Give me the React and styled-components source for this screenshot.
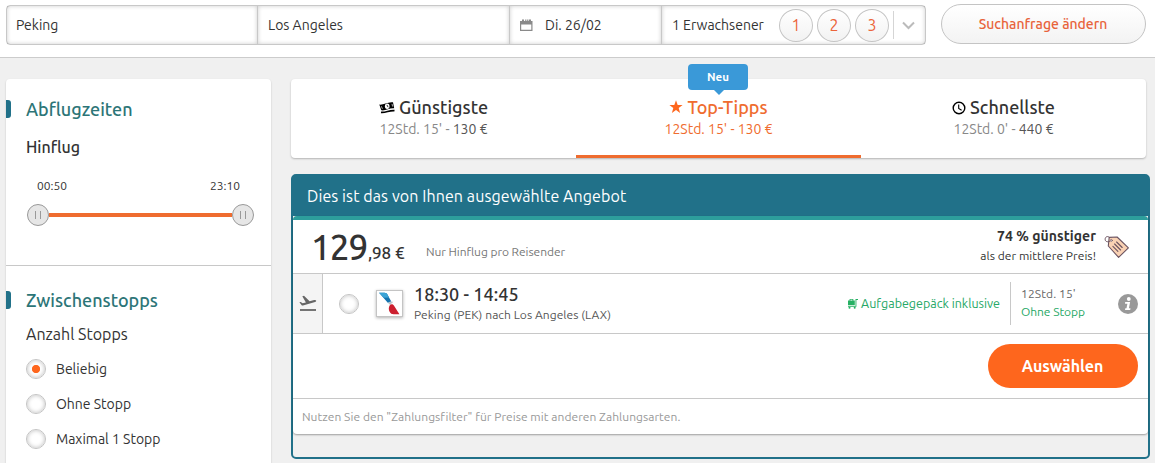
import { useState } from 'react';
import styled, { createGlobalStyle } from 'styled-components';

const airports = [
  { name: 'Peking', width: '250px' },
  { name: 'Los Angeles', width: '252px' },
];

const stops = ['Beliebig', 'Ohne Stopp', 'Maximal 1 Stopp'];

const tabs = [
  { name: 'Günstigste', time: "12Std. 15'", price: '130 €', icon: CashIcon },
  { name: 'Top-Tipps', time: "12Std. 15'", price: '130 €', icon: StarIcon, badge: 'Neu' },
  { name: 'Schnellste', time: "12Std. 0'", price: '440 €', icon: ClockIcon },
];

function CalendarIcon() {
  return (
    <svg width="13" height="13" viewBox="0 0 13 13">
      <path
        fill="#8a8a8a"
        fillRule="evenodd"
        d="M0 2h2V.5h2V2h1.2V.5h1.2V2h.8V.5h1.2V2H9V.5h2V2h1.5v10H0zM1.2 5.500v5.300h10.100V5.500z"
      />
    </svg>
  );
}

function CashIcon() {
  return (
    <svg width="16" height="14" viewBox="0 0 16 14">
      <path d="M.3 3.600C5 4 8.500.6 14 1.300l1.200 6C10.500 6.700 7 10 2.300 9.300z" fill="#000" />
      <path d="M2 11.400c5 .6 8.300-2.400 13.500-1.700" fill="none" stroke="#000" strokeWidth="1.700" />
      <ellipse cx="8.200" cy="5.300" rx="2.300" ry="2.700" fill="#fff" />
      <path d="M7.900 3.900l1.200 2.300" stroke="#000" strokeWidth=".8" fill="none" />
      <path d="M2.400 5.300l1 2.500M13 2.900l.6 2.600" stroke="#fff" fill="none" strokeWidth=".7" />
    </svg>
  );
}

function StarIcon() {
  return (
    <svg width="14" height="16" viewBox="0 0 14 16">
      <path fill="#fe661d" d="M7 .3l1.700 4.700 4.900.1-3.900 3 1.400 4.800L7 10.100l-4.100 2.800 1.400-4.800-3.900-3 4.900-.1z" />
    </svg>
  );
}

function ClockIcon() {
  return (
    <svg width="14" height="14" viewBox="0 0 14 14" fill="none" stroke="#000">
      <circle cx="7" cy="7" r="5.800" strokeWidth="1.400" />
      <path d="M6.700 3.400v4l2.900 1.800" strokeWidth="1.100" />
    </svg>
  );
}

function ChevronIcon() {
  return (
    <svg width="13" height="9" viewBox="0 0 13 9">
      <path d="M1 1.500l5.500 5.500L12 1.500" fill="none" stroke="#bbb" strokeWidth="2" />
    </svg>
  );
}

function TakeoffIcon() {
  return (
    <svg width="18" height="17" viewBox="0 0 18 17">
      <path
        fill="#666"
        d="M.4 7.300l1.300-.3 1.900 1.300 3.300-.9L3.300 1.300l1.700-.5 5.600 5.400 4.500-1.200c2.300-.5 2.900 1.400 1 2L4 10.600l-1.100-.2z"
      />
      <path d="M1 15h16" stroke="#666" strokeWidth="1.800" />
    </svg>
  );
}

function AirlineLogo() {
  return (
    <svg width="23" height="23" viewBox="0 0 22 22">
      <path d="M1 .8h5.200c1.500 0 2.400.8 3.200 2.200l3.400 6.300c-1.500 0-2.500.3-3.200 1.200z" fill="#1473ae" />
      <path d="M1 .8h5.200c1.500 0 2.400.8 3.200 2.200l1.200 2.200-5 .4z" fill="#3ba4d6" />
      <path d="M9.600 10.500c.7-1 2-1.300 5-1.100l-3 3z" fill="#b9c4cb" />
      <path d="M11.300 12.600c.9-1 2.800-1.300 3.900.3l5.300 8.400H15c-2 0-3-.8-3.900-2.400-1.100-2.200-1-4.700.2-6.300z" fill="#cc1f2f" />
    </svg>
  );
}

function CartIcon() {
  return (
    <svg width="11" height="11" viewBox="0 0 11 11" fill="#26b063">
      <path d="M1 2.500h1.600V1h3.700v1.500h1.500v4.800H1zM8.500 1H11v1H9.400v6.800H1V7.900h7.500z" />
      <path d="M3.400 1.700v.9h2v-.9z" fill="#fff" />
      <circle cx="2.500" cy="9.800" r="1" />
      <circle cx="7.700" cy="9.800" r="1" />
    </svg>
  );
}

function TagIcon() {
  return (
    <svg width="26" height="24" viewBox="0 0 26 24" strokeLinejoin="round" strokeLinecap="round">
      <path d="M5.200 2.400l7.900-.4 11.300 10.800-9.800 9.600L4.300 11z" fill="#fad2b4" stroke="#6b5360" strokeWidth="1.100" />
      <path d="M6 6.200C3.500 7.600.8 6.600 1.200 3.700 1.600 1.400 4 .8 5.400 2.400" fill="none" stroke="#6b5360" />
      <circle cx="7.300" cy="5.400" r="1" fill="#fff" stroke="#6b5360" strokeWidth=".7" />
      <path d="M12.600 7l5.600 5.500M10.600 9l6 6M8.900 11.300l5 5" stroke="#6b5360" strokeWidth="1.100" fill="none" />
    </svg>
  );
}

function InfoIcon() {
  return (
    <svg width="20" height="20" viewBox="0 0 20 20">
      <circle cx="10" cy="10" r="10" fill="#999" />
      <circle cx="10.800" cy="5" r="1.900" fill="#fff" />
      <path d="M7.200 8h4.900l-1.200 6.300h1.600l-.3 1.700H7l.3-1.700h1.200l.9-4.600H7z" fill="#fff" />
    </svg>
  );
}

const SearchHeader = () => (
  <Header>
    <SearchBar>
      {airports.map(({ name, width }) => (
        <Field key={name} $width={width}>
          {name}
        </Field>
      ))}
      <Field $width="152px">
        <CalendarIcon />
        <DateText>Di. 26/02</DateText>
      </Field>
      <Field $width="264px">
        1 Erwachsener
        <Counters>
          {[1, 2, 3].map((n) => (
            <Counter key={n} type="button">
              {n}
            </Counter>
          ))}
        </Counters>
        <MoreButton type="button">
          <ChevronIcon />
        </MoreButton>
      </Field>
    </SearchBar>
    <ChangeButton type="button">Suchanfrage ändern</ChangeButton>
  </Header>
);

const Filters = () => {
  const [selected, setSelected] = useState('Beliebig');

  return (
    <Sidebar>
      <FilterSection $height="186px">
        <FilterTitle>Abflugzeiten</FilterTitle>
        <DirectionTitle>Hinflug</DirectionTitle>
        <TimeRange>
          <span>00:50</span>
          <span>23:10</span>
        </TimeRange>
        <Slider>
          <Handle />
          <Track />
          <Handle />
        </Slider>
      </FilterSection>
      <FilterSection $height="230px" $second>
        <FilterTitle>Zwischenstopps</FilterTitle>
        <StopsTitle>Anzahl Stopps</StopsTitle>
        {stops.map((label) => (
          <Option key={label} onClick={() => setSelected(label)}>
            <Radio $checked={selected === label} />
            {label}
          </Option>
        ))}
      </FilterSection>
    </Sidebar>
  );
};

const SortTabs = () => (
  <TabBar>
    {tabs.map(({ name, time, price, icon: Icon, badge }) => (
      <Tab key={name} $active={!!badge}>
        {badge && <Badge>{badge}</Badge>}
        <TabTitle>
          <Icon />
          {name}
        </TabTitle>
        <TabInfo $active={!!badge}>
          {time} - <strong>{price}</strong>
        </TabInfo>
      </Tab>
    ))}
  </TabBar>
);

const Offer = () => (
  <OfferBox>
    <OfferHeader>Dies ist das von Ihnen ausgewählte Angebot</OfferHeader>
    <OfferCard>
      <PriceRow>
        <Amount>129</Amount>
        <Cents>,98 €</Cents>
        <PriceNote>Nur Hinflug pro Reisender</PriceNote>
        <Saving>
          <strong>74 % günstiger</strong>
          <span>als der mittlere Preis!</span>
        </Saving>
        <TagIcon />
      </PriceRow>
      <FlightRow>
        <Direction>
          <TakeoffIcon />
        </Direction>
        <Radio />
        <Airline>
          <AirlineLogo />
        </Airline>
        <Flight>
          <FlightTime>18:30 - 14:45</FlightTime>
          <Route>Peking (PEK) nach Los Angeles (LAX)</Route>
        </Flight>
        <Luggage>
          <CartIcon />
          Aufgabegepäck inklusive
        </Luggage>
        <Duration>
          <span>12Std. 15'</span>
          <Direct>Ohne Stopp</Direct>
        </Duration>
        <InfoIcon />
      </FlightRow>
      <ActionRow>
        <SelectButton type="button">Auswählen</SelectButton>
      </ActionRow>
      <PaymentNote>
        Nutzen Sie den "Zahlungsfilter" für Preise mit anderen Zahlungsarten.
      </PaymentNote>
    </OfferCard>
  </OfferBox>
);

export default function App() {
  return (
    <Page>
      <GlobalStyle />
      <SearchHeader />
      <Content>
        <Filters />
        <Results>
          <SortTabs />
          <Offer />
        </Results>
      </Content>
    </Page>
  );
}

const GlobalStyle = createGlobalStyle`
  * {
    box-sizing: border-box;
  }

  body {
    margin: 0;
    overflow: hidden;
  }

  button {
    font-family: inherit;
    padding: 0;
    cursor: pointer;
  }

  svg {
    display: block;
    flex-shrink: 0;
  }
`;

const Page = styled.div`
  height: 463px;
  overflow: hidden;
  background: #f0f0f0;
  color: #333;
  font-family: Ubuntu, 'Open Sans', 'Noto Sans', sans-serif;
  font-size: 14px;
  white-space: nowrap;
`;

const Header = styled.header`
  display: flex;
  gap: 15px;
  height: 58px;
  padding: 4px 0 0 6px;
  background: #fff;
  border-bottom: 1px solid #ccc;
`;

const SearchBar = styled.div`
  display: flex;
  width: 920px;
  height: 40px;
  margin-top: 1px;
  border: 1px solid #c8c8c8;
  border-radius: 4px;
`;

const Field = styled.div`
  display: flex;
  align-items: center;
  width: ${({ $width }) => $width};
  padding-left: 9px;
  box-shadow: inset 0 0 4px rgba(0, 0, 0, 0.2);

  & + & {
    padding-left: 10px;
    border-left: 1px solid #c8c8c8;
  }
`;

const DateText = styled.span`
  margin-left: 12px;
`;

const Counters = styled.div`
  display: flex;
  gap: 4px;
  margin-left: auto;
`;

const Counter = styled.button`
  width: 34px;
  height: 33px;
  border: 1px solid #c4c4c4;
  border-radius: 50%;
  background: linear-gradient(#fff, #f2f2f2);
  color: #ec643a;
  font-size: 16px;
`;

const MoreButton = styled.button`
  display: flex;
  align-items: center;
  justify-content: center;
  width: 32px;
  height: 28px;
  margin-left: 4px;
  padding-right: 3px;
  border: 0;
  border-left: 1px solid #d5d5d5;
  background: none;
`;

const ChangeButton = styled.button`
  width: 205px;
  height: 40px;
  padding-right: 1px;
  border: 1px solid #c4c4c4;
  border-radius: 20px;
  background: linear-gradient(#fff, #f3f3f3);
  color: #e8633b;
  font-size: 14px;
  font-weight: 500;
`;

const Content = styled.div`
  display: flex;
  align-items: flex-start;
  gap: 20px;
  padding: 21px 0 0 6px;
`;

const Sidebar = styled.aside`
  width: 265px;
  background: #fff;
  border-radius: 4px;
  box-shadow: 0 1px 2px rgba(0, 0, 0, 0.2);
`;

const FilterSection = styled.section`
  height: ${({ $height }) => $height};
  padding: ${({ $second }) => ($second ? '25px' : '21px')} 17px 0 20px;

  & + & {
    border-top: 1px solid #c8c8c8;
  }
`;

const FilterTitle = styled.h3`
  display: flex;
  align-items: center;
  height: 18px;
  margin: 0;
  color: #2c7577;
  font-size: 18px;
  font-weight: 500;
  line-height: 18px;

  &::before {
    content: '';
    width: 5px;
    height: 18px;
    margin: 0 15px 0 -20px;
    border-radius: 0 3px 3px 0;
    background: #217189;
  }
`;

const DirectionTitle = styled.h4`
  margin: 18px 0 0;
  font-size: 16px;
  font-weight: 500;
  line-height: 22px;
`;

const TimeRange = styled.div`
  display: flex;
  justify-content: space-between;
  margin-top: 20px;
  padding: 0 14px 0 11px;
  font-size: 12px;
  line-height: 16px;
`;

const Slider = styled.div`
  display: flex;
  align-items: center;
  margin: 10px 0 0 1px;
`;

const Handle = styled.div`
  display: flex;
  align-items: center;
  justify-content: center;
  width: 22px;
  height: 22px;
  border: 1px solid #999;
  border-radius: 50%;
  background: #e6e6e6;

  &::before {
    content: '';
    width: 4px;
    height: 8px;
    border: solid #999;
    border-width: 0 1px;
  }
`;

const Track = styled.div`
  flex: 1;
  height: 4px;
  background: #ef6c2f;
`;

const StopsTitle = styled.div`
  margin: 14px 0;
  font-size: 16px;
  line-height: 22px;
`;

const Option = styled.div`
  display: flex;
  align-items: center;
  gap: 10px;
  height: 20px;
  margin-bottom: 15px;
  cursor: pointer;
`;

const Radio = styled.span`
  width: 20px;
  height: 20px;
  flex-shrink: 0;
  border: 1px solid #c4c4c4;
  border-radius: 50%;
  background: ${({ $checked }) =>
    $checked ? 'radial-gradient(circle, #fe661d 3.7px, #fff 4.5px)' : '#fff'};
  box-shadow: inset 0 0 4px rgba(0, 0, 0, 0.25);
`;

const Results = styled.main`
  width: 859px;
`;

const TabBar = styled.nav`
  display: grid;
  grid-template-columns: repeat(3, 1fr);
  width: 855px;
  height: 79px;
  background: #fff;
  border-radius: 4px;
  box-shadow: 0 1px 2px rgba(0, 0, 0, 0.25);
`;

const Tab = styled.div`
  position: relative;
  display: flex;
  flex-direction: column;
  align-items: center;
  padding-top: 17px;
  color: ${({ $active }) => ($active ? '#ef6c2f' : '#333')};
  border-bottom: 3px solid ${({ $active }) => ($active ? '#ef6c2f' : 'transparent')};
`;

const Badge = styled.span`
  position: absolute;
  top: -15px;
  left: 112px;
  width: 60px;
  height: 26px;
  border-radius: 4px;
  background: #3a99d8;
  color: #fff;
  font-size: 11.5px;
  font-weight: 700;
  line-height: 26px;
  text-align: center;

  &::after {
    content: '';
    position: absolute;
    top: 26px;
    left: 26px;
    border: 5px solid transparent;
    border-top-color: #3a99d8;
    border-bottom: 0;
  }
`;

const TabTitle = styled.h2`
  display: flex;
  align-items: center;
  gap: 4px;
  margin: 0;
  font-size: 18px;
  font-weight: 500;
  line-height: 23px;
`;

const TabInfo = styled.div`
  color: ${({ $active }) => ($active ? 'inherit' : '#888')};
  line-height: 20px;

  strong {
    color: ${({ $active }) => ($active ? 'inherit' : '#555')};
    font-weight: 400;
  }
`;

const OfferBox = styled.section`
  height: 285px;
  margin-top: 16px;
  border: 2px solid #217189;
  border-radius: 5px;
`;

const OfferHeader = styled.div`
  height: 40px;
  padding-left: 14px;
  background: #217189;
  color: #fff;
  font-size: 16px;
  line-height: 41px;
  letter-spacing: 0.1px;
`;

const OfferCard = styled.article`
  height: 218px;
  background: #fff;
  border-top: 4px solid #2d9e9c;
  border-radius: 4px;
  box-shadow: 0 1px 2px rgba(0, 0, 0, 0.35);
`;

const PriceRow = styled.div`
  display: flex;
  height: 53px;
  padding: 0 18px;
  align-items: center;
`;

const Amount = styled.span`
  width: 56px;
  font-size: 35px;
  font-weight: 500;
  letter-spacing: -1px;
`;

const Cents = styled.span`
  width: 39px;
  margin: 11px 0 0 1px;
  font-size: 17px;
  font-weight: 500;
  letter-spacing: -0.1px;
`;

const PriceNote = styled.span`
  margin: 10px 0 0 19px;
  color: #777;
  font-size: 12px;
  letter-spacing: -0.05px;
`;

const Saving = styled.div`
  display: flex;
  flex-direction: column;
  align-items: flex-end;
  margin: -1px 8px 0 auto;
  font-size: 12px;
  line-height: 19px;
  letter-spacing: 0.06px;

  strong {
    font-size: 14px;
  }
`;

const FlightRow = styled.div`
  display: flex;
  align-items: center;
  height: 61px;
  padding-right: 10px;
  border: solid #c8c8c8;
  border-width: 1px 0;
`;

const Direction = styled.div`
  display: flex;
  align-items: center;
  justify-content: center;
  width: 30px;
  height: 100%;
  margin-right: 16px;
  background: #f4f4f4;
  border-right: 1px solid #c8c8c8;
`;

const Airline = styled.div`
  display: flex;
  align-items: center;
  justify-content: center;
  width: 27px;
  height: 27px;
  margin: 0 11px 0 17px;
  border: 1px solid #c4c4c4;
  box-shadow: 0 1px 3px rgba(0, 0, 0, 0.3);
`;

const Flight = styled.div`
  display: flex;
  flex-direction: column;
  padding-top: 2px;
`;

const FlightTime = styled.span`
  font-size: 18px;
  font-weight: 500;
  line-height: 21px;
  letter-spacing: 0.05px;
`;

const Route = styled.span`
  color: #555;
  font-size: 12px;
  line-height: 20px;
  letter-spacing: 0.05px;
`;

const Luggage = styled.div`
  display: flex;
  align-items: center;
  gap: 3px;
  margin: -1px 0 0 auto;
  color: #26a866;
  font-size: 12.5px;
`;

const Duration = styled.div`
  display: flex;
  flex-direction: column;
  justify-content: center;
  width: 108px;
  height: 43px;
  margin-left: 10px;
  padding: 0 0 1px 10px;
  border-left: 1px solid #c8c8c8;
  color: #666;
  font-size: 12px;
  line-height: 18px;
  letter-spacing: 0.12px;
`;

const Direct = styled.span`
  color: #26a866;
  letter-spacing: -0.05px;
`;

const ActionRow = styled.div`
  display: flex;
  align-items: center;
  justify-content: flex-end;
  height: 65px;
  padding-right: 10px;
  border-bottom: 1px solid #c8c8c8;
`;

const SelectButton = styled.button`
  width: 150px;
  height: 44px;
  padding-right: 1px;
  border: 0;
  border-radius: 22px;
  background: #fe661d;
  color: #fff;
  font-size: 16px;
  font-weight: 600;
  letter-spacing: -0.05px;
`;

const PaymentNote = styled.div`
  padding-left: 9px;
  color: #999;
  font-size: 12px;
  line-height: 36px;
  letter-spacing: 0.05px;
`;
